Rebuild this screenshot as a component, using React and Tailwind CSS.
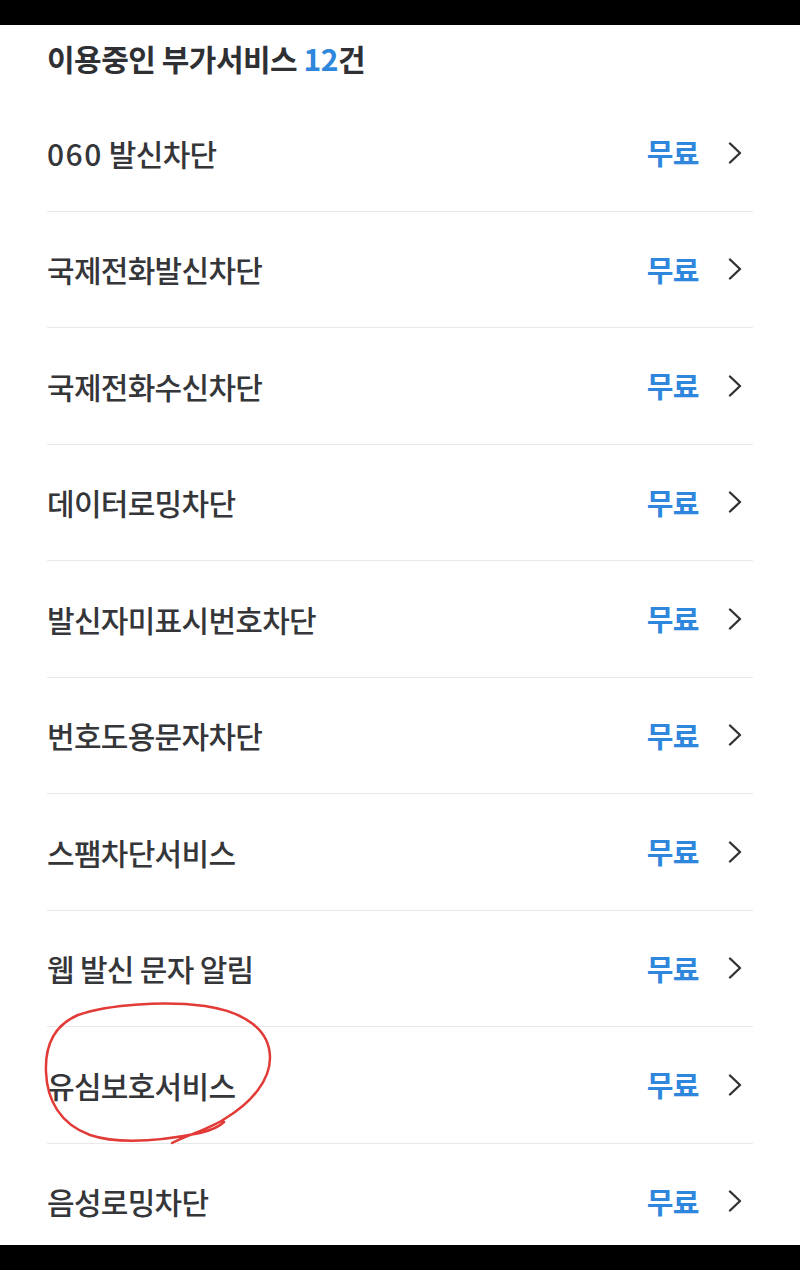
import React from "react";

const items = [
  "060 발신차단",
  "국제전화발신차단",
  "국제전화수신차단",
  "데이터로밍차단",
  "발신자미표시번호차단",
  "번호도용문자차단",
  "스팸차단서비스",
  "웹 발신 문자 알림",
  "유심보호서비스",
  "음성로밍차단",
];

function Chevron() {
  return (
    <svg width="16" height="22" viewBox="0 0 16 22" fill="none">
      <polyline
        points="3,1.5 13,11 3,20.5"
        stroke="#333"
        strokeWidth="2.4"
        strokeLinecap="round"
        strokeLinejoin="round"
      />
    </svg>
  );
}

function Label({ t }) {
  if (t.startsWith("060")) {
    return (
      <>
        <span className="tracking-[1.5px]">060</span> 발신차단
      </>
    );
  }
  return t;
}

export default function App() {
  return (
    <div
      className="relative w-[800px] h-[1270px] flex flex-col bg-white overflow-hidden"
      style={{ fontFamily: '"Noto Sans CJK KR", "Noto Sans", sans-serif' }}
    >
      <div className="h-[25px] bg-black shrink-0" />
      <div className="flex-1 overflow-hidden">
        <div className="h-[70px] flex items-center pb-[4px] px-[47px]">
          <span className="text-[30px] leading-none font-semibold text-[#2f3034] tracking-[-0.5px]">
            이용중인 부가서비스 <span className="text-[#2e86dd]">12</span>건
          </span>
        </div>
        <div className="mx-[47px]">
          {items.map((t, i) => (
            <div
              key={i}
              className="h-[116.5px] flex items-center justify-between border-b border-[#e8e9ea]"
            >
              <span className="text-[30px] leading-none font-medium text-[#353639] tracking-[-0.7px]">
                <Label t={t} />
              </span>
              <div className="flex items-center gap-[28px] pr-[10px]">
                <span className="text-[29px] leading-none font-bold text-[#2e86dd] tracking-[-0.5px]">무료</span>
                <Chevron />
              </div>
            </div>
          ))}
        </div>
      </div>
      <div className="h-[25px] bg-black shrink-0" />
      <svg
        className="absolute left-0 top-0 pointer-events-none"
        width="800"
        height="1270"
        viewBox="0 0 800 1270"
        fill="none"
      >
        <path
          d="M172 1143 C190 1134 212 1128 226 1118 C252 1102 270 1080 270 1058 C270 1030 245 1012 205 1006 C165 1001 110 1004 78 1015 C52 1026 45 1048 46 1072 C47 1100 60 1124 90 1135 C120 1145 165 1140 200 1133 C212 1130 220 1126 224 1122"
          stroke="#e23a36"
          strokeWidth="2.5"
          strokeLinecap="round"
          strokeLinejoin="round"
        />
      </svg>
    </div>
  );
}
